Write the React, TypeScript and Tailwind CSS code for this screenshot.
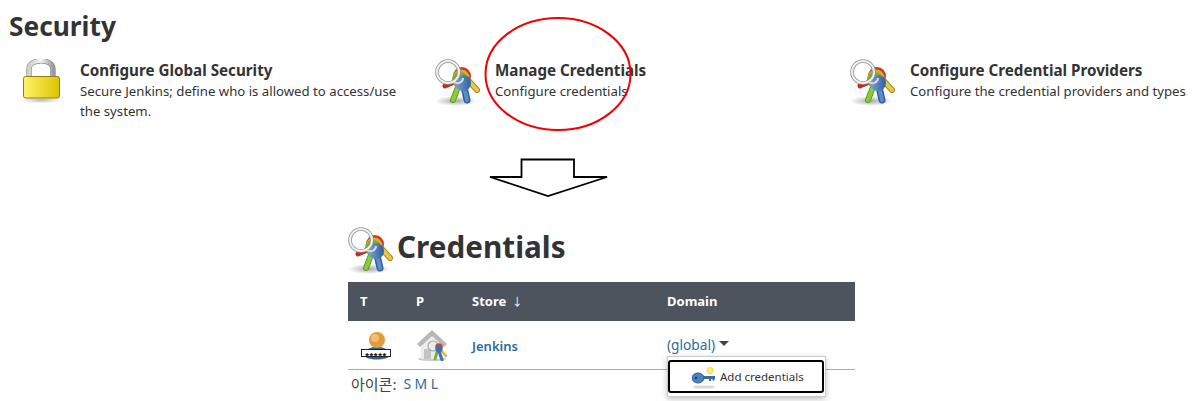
import React from 'react';

function KeysIcon({ size = 48 }: { size?: number }) {
  return (
    <svg width={size} height={size} viewBox="0 2 48 48" className="shrink-0">
      <defs>
        <radialGradient id="keyShadow">
          <stop offset="0%" stopColor="#8a8a8a" stopOpacity="0.75" />
          <stop offset="100%" stopColor="#8a8a8a" stopOpacity="0" />
        </radialGradient>
        <linearGradient id="keyBlue" x1="0" y1="0" x2="1" y2="0">
          <stop offset="0%" stopColor="#7ba3d6" />
          <stop offset="100%" stopColor="#2f5f9e" />
        </linearGradient>
      </defs>
      <ellipse cx="21" cy="44" rx="21" ry="5" fill="url(#keyShadow)" />
      <path d="M32 22 L42 33" stroke="#a88a1e" strokeWidth="6" strokeLinecap="round" />
      <path d="M32 22 L42 33" stroke="#e6c84a" strokeWidth="4" strokeLinecap="round" />
      <path d="M22 24 L10 29" stroke="#c92a1e" strokeWidth="5" strokeLinecap="round" />
      <path d="M23 30 L18 43" stroke="#5a9a20" strokeWidth="6" strokeLinecap="round" />
      <path d="M23 30 L18 43" stroke="#8ccc3a" strokeWidth="4" strokeLinecap="round" />
      <circle cx="27" cy="19" r="9" fill="#c93a22" />
      <circle cx="26" cy="21" r="8.5" fill="#e6a82a" />
      <circle cx="25" cy="23" r="8" fill="#6fb52e" />
      <path d="M29 30 L32 43" stroke="#2f5f9e" strokeWidth="7" strokeLinecap="round" />
      <path d="M29 30 L32 43" stroke="#5d8cc8" strokeWidth="4" strokeLinecap="round" />
      <circle cx="28" cy="26" r="8" fill="url(#keyBlue)" />
      <circle cx="13" cy="15" r="11" fill="none" stroke="#8f8f8f" strokeWidth="3.6" />
      <circle cx="13" cy="15" r="11" fill="none" stroke="#efefef" strokeWidth="2" />
      <path d="M19 25 C23 28 28 25 28 21" fill="none" stroke="#dcdcdc" strokeWidth="2" />
    </svg>
  );
}

function LockIcon() {
  return (
    <svg width="48" height="48" viewBox="0 2 48 48" className="shrink-0">
      <defs>
        <linearGradient id="lockBody" x1="0" y1="0" x2="1" y2="0">
          <stop offset="0%" stopColor="#fff26a" />
          <stop offset="100%" stopColor="#dcc400" />
        </linearGradient>
        <linearGradient id="lockBow" x1="0" y1="0" x2="1" y2="0">
          <stop offset="0%" stopColor="#cfcfcf" />
          <stop offset="50%" stopColor="#f2f2f2" />
          <stop offset="100%" stopColor="#9b9b9b" />
        </linearGradient>
        <radialGradient id="lockShadow">
          <stop offset="0%" stopColor="#8a8a8a" stopOpacity="0.6" />
          <stop offset="100%" stopColor="#8a8a8a" stopOpacity="0" />
        </radialGradient>
      </defs>
      <ellipse cx="21" cy="43" rx="20" ry="3.5" fill="url(#lockShadow)" />
      <path d="M9 21 V12 C9 1 33 1 33 12 V21" fill="none" stroke="#8a8a8a" strokeWidth="5.4" />
      <path d="M9 21 V12 C9 1 33 1 33 12 V21" fill="none" stroke="url(#lockBow)" strokeWidth="4" />
      <rect x="3.5" y="19.5" width="36" height="21.5" rx="2" fill="url(#lockBody)" stroke="#8f7f10" />
    </svg>
  );
}

function CredentialUserIcon() {
  return (
    <svg width="32" height="32" viewBox="0 0 32 32">
      <path d="M4 26 C5 15 29 15 30 26 C29 32 5 32 4 26Z" fill="#33609c" />
      <circle cx="17" cy="11" r="8" fill="#e39a3a" />
      <circle cx="15" cy="9" r="4" fill="#f2bd74" />
      <rect x="1.5" y="20.5" width="29" height="7" fill="#fff" stroke="#222" />
      <text x="16" y="29.5" textAnchor="middle" fontSize="9.5" fontWeight="700" letterSpacing="0.6" fill="#111" fontFamily="'Liberation Sans', sans-serif">*****</text>
    </svg>
  );
}

function StoreIcon() {
  return (
    <svg width="32" height="32" viewBox="0 0 32 32">
      <ellipse cx="16" cy="30" rx="14" ry="2" fill="#ccc" />
      <path d="M5 15 V30 H27 V15 L16 6Z" fill="#ececec" />
      <path d="M1 15 L16 1 L31 15 L28 18 L16 7 L4 18Z" fill="#b8b8b8" />
      <rect x="8" y="20" width="7" height="10" fill="#c4c4c4" />
      <circle cx="17" cy="17" r="5" fill="none" stroke="#aaa" strokeWidth="1.2" />
      <path d="M24 20 L30 27" stroke="#d9b93c" strokeWidth="2.6" strokeLinecap="round" />
      <path d="M21 23 L19 30" stroke="#73b52f" strokeWidth="2.8" strokeLinecap="round" />
      <circle cx="23" cy="18" r="3.8" fill="#cf4a2a" />
      <circle cx="23" cy="20" r="3.4" fill="#3f70b0" />
      <path d="M23 22 L26 31" stroke="#3f70b0" strokeWidth="3" strokeLinecap="round" />
    </svg>
  );
}

function AddKeyIcon() {
  return (
    <svg width="24" height="24" viewBox="0 0 24 24" className="shrink-0">
      <ellipse cx="12" cy="22" rx="11" ry="1.6" fill="#bbb" opacity="0.6" />
      <circle cx="18" cy="5.5" r="3" fill="#fff07a" stroke="#e8dc30" />
      <rect x="8" y="11" width="15" height="3" fill="#3a6aa8" />
      <rect x="17" y="13" width="2" height="3" fill="#3a6aa8" />
      <rect x="20.5" y="13" width="2" height="2.5" fill="#3a6aa8" />
      <ellipse cx="6" cy="13" rx="6" ry="5" fill="#5080bf" stroke="#2f5a94" />
      <circle cx="4" cy="13" r="1.2" fill="#1f3f6f" />
    </svg>
  );
}

function ManageItem({ icon, title, children, className }: { icon: React.ReactNode; title: string; children: React.ReactNode; className: string }) {
  return (
    <div className={`flex gap-3 ${className}`}>
      {icon}
      <div className="pt-[1px]">
        <div className="text-[15.2px] leading-[21px] font-bold text-[#333]">{title}</div>
        <div className="text-[13.2px] leading-[20px] text-[#333]">{children}</div>
      </div>
    </div>
  );
}

export default function App() {
  return (
    <div
      className="relative w-[1204px] h-[401px] overflow-hidden bg-white text-[#333]"
      style={{ fontFamily: "'Noto Sans', 'Noto Sans CJK KR', sans-serif" }}
    >
      <h2 className="pl-[9px] pt-[7px] text-[26.3px] leading-[38px] font-bold">Security</h2>

      <div className="flex pl-[20px] pt-[14px]">
        <ManageItem icon={<LockIcon />} title="Configure Global Security" className="w-[415px] pr-[30px]">
          Secure Jenkins; define who is allowed to access/use the system.
        </ManageItem>
        <ManageItem icon={<KeysIcon />} title="Manage Credentials" className="w-[415px]">
          Configure credentials
        </ManageItem>
        <ManageItem icon={<KeysIcon />} title="Configure Credential Providers" className="w-[354px]">
          <span className="whitespace-nowrap">Configure the credential providers and types</span>
        </ManageItem>
      </div>

      {/* annotation drawn over the screenshot */}
      <svg width="150" height="120" viewBox="0 0 150 120" className="absolute left-[483px] top-[17px]">
        <ellipse cx="75" cy="57" rx="72.5" ry="56" fill="none" stroke="#f00000" strokeWidth="2" />
      </svg>
      <svg width="122" height="42" viewBox="0 0 122 42" className="absolute left-[488px] top-[157px]">
        <path d="M33.5 2.5 H86 V20 H119 L60 39 L2 20 H33.5Z" fill="#fff" stroke="#000" strokeWidth="1.8" />
      </svg>

      <div className="ml-[348px] mt-[91px] w-[507px]">
        <h1 className="flex h-[70px] items-center text-[29.7px] font-bold leading-none">
          <span className="mt-[8px] flex">
            <KeysIcon />
          </span>
          <span className="ml-[1px]">Credentials</span>
        </h1>

        <table className="w-full border-collapse text-[14px]">
          <thead>
            <tr className="h-[39px] bg-[#4d545d] text-left text-[13px] font-bold text-white">
              <th className="w-[68px] pl-[12px] pt-[1px]">T</th>
              <th className="w-[56px] pt-[1px]">P</th>
              <th className="w-[195px] pt-[1px]">
                Store <span className="ml-[2px] text-[11px] font-normal">↓</span>
              </th>
              <th className="pt-[1px]">Domain</th>
            </tr>
          </thead>
          <tbody>
            <tr className="h-[48px] border-b border-[#a9adb2]">
              <td className="pl-[12px] align-middle"><div className="flex"><CredentialUserIcon /></div></td>
              <td className="align-middle"><div className="flex"><StoreIcon /></div></td>
              <td className="pt-[3px] text-[13px] font-semibold text-[#2c6a9e]">Jenkins</td>
              <td className="relative pt-[1px] text-[13.7px] text-[#2c6a9e]">
                <span className="flex items-center gap-[4px]">
                  (global)
                  <span className="mb-[3px] border-x-[5px] border-t-[5px] border-x-transparent border-t-[#444]" />
                </span>
                <div className="absolute left-0 top-[35px] z-10 h-[41px] w-[159px] border border-[#ccc] bg-white pt-[3px] shadow-[0_2px_6px_rgba(0,0,0,0.25)]">
                  <div className="flex h-[33px] w-[156px] items-center gap-[4px] rounded-[3px] border-2 border-black pl-[22px] text-[11.5px] text-[#333]">
                    <AddKeyIcon />
                    Add credentials
                  </div>
                </div>
              </td>
            </tr>
          </tbody>
        </table>

        <div className="mt-[4px] flex gap-[7px] pl-[3px] text-[14px] leading-[20px]">
          <span className="text-[15px] text-[#444]">아이콘:</span>
          <span className="flex gap-[3.5px] text-[#2c6a9e]">
            <span>S</span>
            <span>M</span>
            <span>L</span>
          </span>
        </div>
      </div>
    </div>
  );
}
